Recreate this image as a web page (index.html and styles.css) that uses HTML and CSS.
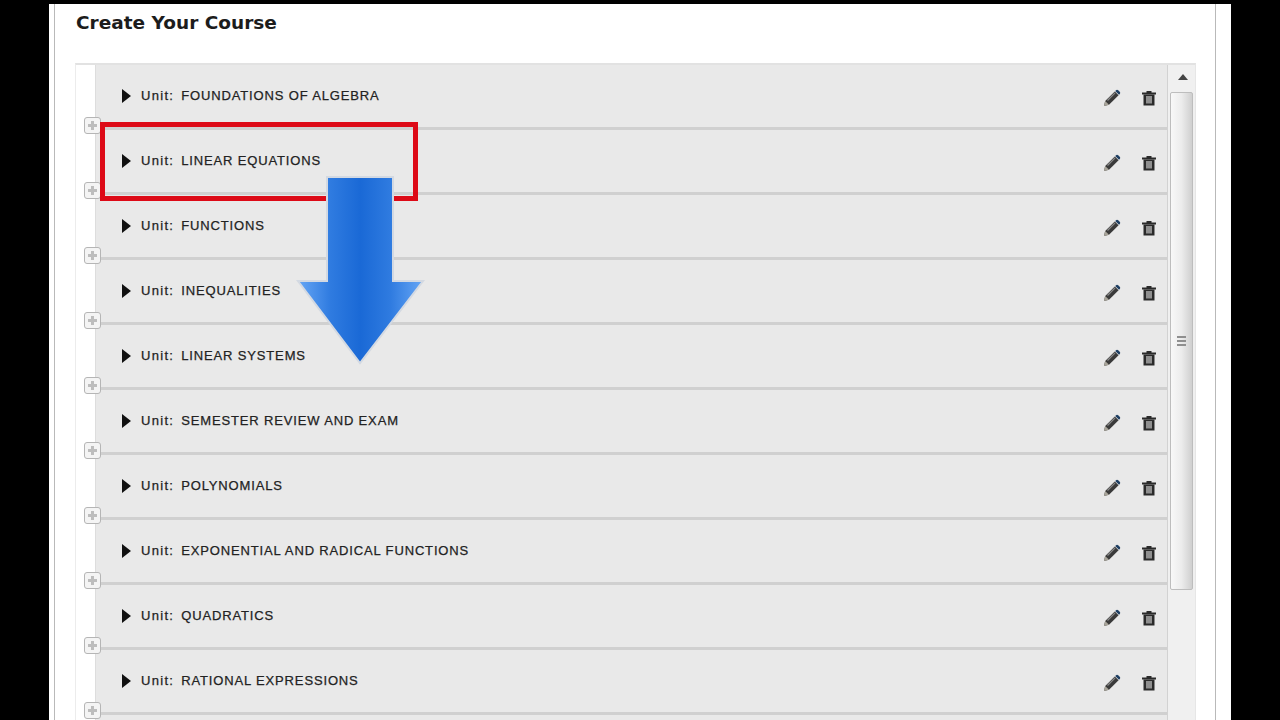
FILE: index.html
```html
<!DOCTYPE html>
<html lang="en">

<head>
    <meta charset="UTF-8">
    <title>Create Your Course</title>
    <link rel="stylesheet" href="styles.css">
</head>

<body>
    <svg class="sprites" width="0" height="0">
        <symbol id="pencil" viewBox="0 0 18 18">
            <path d="M1 17l1.2-5L11.8 2.400l3.800 3.800L6 15.800z" fill="#3a3a3a" />
            <path d="M12.800 1.400c.8-.8 1.700-.8 2.400-.1l1.500 1.500c.7.7.7 1.600-.1 2.400l-.6.6-3.800-3.800z" fill="#1f3f63" />
            <path d="M1 17l1.200-5 3.800 3.800z" fill="#a9a59a" />
            <path d="M4.500 11.500l7.600-7.600" stroke="#8b8b8b" stroke-width="1.200" />
        </symbol>
        <symbol id="trash" viewBox="0 0 16 16">
            <path d="M1 2.500h14V4.500H1zM5.500 1h5v2h-5z" fill="#2a2a2a" />
            <path d="M2.500 4.500h11V15.500h-11z" fill="#2a2a2a" />
            <path d="M5 6h6v7.500H5z" fill="#8f8f8f" />
        </symbol>
    </svg>

    <div class="page">
        <div class="frame">
            <h1 class="title">Create Your Course</h1>
            <div class="panel">
                <div class="gutter"></div>
                <div class="list">
                    <div class="row">
                        <span class="caret"></span><span class="label">Unit:</span><span class="name">FOUNDATIONS OF ALGEBRA</span>
                        <svg class="pencil"><use href="#pencil" /></svg><svg class="trash"><use href="#trash" /></svg>
                        <span class="add"></span>
                    </div>
                    <div class="row">
                        <span class="caret"></span><span class="label">Unit:</span><span class="name">LINEAR EQUATIONS</span>
                        <svg class="pencil"><use href="#pencil" /></svg><svg class="trash"><use href="#trash" /></svg>
                        <span class="add"></span>
                    </div>
                    <div class="row">
                        <span class="caret"></span><span class="label">Unit:</span><span class="name">FUNCTIONS</span>
                        <svg class="pencil"><use href="#pencil" /></svg><svg class="trash"><use href="#trash" /></svg>
                        <span class="add"></span>
                    </div>
                    <div class="row">
                        <span class="caret"></span><span class="label">Unit:</span><span class="name">INEQUALITIES</span>
                        <svg class="pencil"><use href="#pencil" /></svg><svg class="trash"><use href="#trash" /></svg>
                        <span class="add"></span>
                    </div>
                    <div class="row">
                        <span class="caret"></span><span class="label">Unit:</span><span class="name">LINEAR SYSTEMS</span>
                        <svg class="pencil"><use href="#pencil" /></svg><svg class="trash"><use href="#trash" /></svg>
                        <span class="add"></span>
                    </div>
                    <div class="row">
                        <span class="caret"></span><span class="label">Unit:</span><span class="name">SEMESTER REVIEW AND EXAM</span>
                        <svg class="pencil"><use href="#pencil" /></svg><svg class="trash"><use href="#trash" /></svg>
                        <span class="add"></span>
                    </div>
                    <div class="row">
                        <span class="caret"></span><span class="label">Unit:</span><span class="name">POLYNOMIALS</span>
                        <svg class="pencil"><use href="#pencil" /></svg><svg class="trash"><use href="#trash" /></svg>
                        <span class="add"></span>
                    </div>
                    <div class="row">
                        <span class="caret"></span><span class="label">Unit:</span><span class="name">EXPONENTIAL AND RADICAL FUNCTIONS</span>
                        <svg class="pencil"><use href="#pencil" /></svg><svg class="trash"><use href="#trash" /></svg>
                        <span class="add"></span>
                    </div>
                    <div class="row">
                        <span class="caret"></span><span class="label">Unit:</span><span class="name">QUADRATICS</span>
                        <svg class="pencil"><use href="#pencil" /></svg><svg class="trash"><use href="#trash" /></svg>
                        <span class="add"></span>
                    </div>
                    <div class="row">
                        <span class="caret"></span><span class="label">Unit:</span><span class="name">RATIONAL EXPRESSIONS</span>
                        <svg class="pencil"><use href="#pencil" /></svg><svg class="trash"><use href="#trash" /></svg>
                        <span class="add"></span>
                    </div>
                </div>
                <div class="scrollbar">
                    <div class="scroll-up"></div>
                    <div class="thumb">
                        <div class="grip"></div>
                    </div>
                </div>
            </div>
        </div>
    </div>

    <div class="callout"></div>
    <svg class="arrow" width="132" height="192" viewBox="0 0 132 192">
        <defs>
            <linearGradient id="arrowFill" x1="0" x2="1" y1="0" y2="0">
                <stop offset="0" stop-color="#66a6f5" />
                <stop offset="0.26" stop-color="#2f7be0" />
                <stop offset="0.5" stop-color="#1a69d6" />
                <stop offset="0.74" stop-color="#2f7be0" />
                <stop offset="1" stop-color="#66a6f5" />
            </linearGradient>
        </defs>
        <path d="M32 2H98V106H128L65 188 3 106H32z" fill="url(#arrowFill)" stroke="#d3d9e2" stroke-width="2" />
    </svg>
</body>

</html>
```

FILE: styles.css
```css
* {
    margin: 0;
    padding: 0;
    box-sizing: border-box;
}

body {
    background-color: #000000;
    height: 720px;
    overflow: hidden;
    font-family: "Liberation Sans", Arial, sans-serif;
}

.sprites {
    position: absolute;
}

.page {
    margin: 4px 49px 0;
    height: 716px;
    background-color: #ffffff;
    padding: 0 15px 0 5px;
}

.frame {
    height: 716px;
    border-left: 1px solid #b9b9b9;
    border-right: 1px solid #b9b9b9;
    padding: 0 19px 0 20px;
    overflow: hidden;
}

.title {
    font-family: "DejaVu Sans", sans-serif;
    font-size: 18.5px;
    font-weight: bold;
    line-height: 22px;
    color: #1c1c1c;
    padding-top: 8px;
    padding-left: 1px;
    height: 59px;
}

.panel {
    display: flex;
    height: 700px;
    border-top: 2px solid #e2e2e2;
    border-left: 1px solid #ececec;
    border-right: 1px solid #e6e6e6;
}

.gutter {
    width: 19px;
    flex-shrink: 0;
}

.list {
    width: 1073px;
    flex-shrink: 0;
    background-color: #e9e9e9;
    border-right: 1px solid #d2d2d2;
    border-left: 1px solid #dddddd;
}

.row {
    position: relative;
    display: flex;
    align-items: center;
    height: 65px;
    padding: 0 10px 1px 26px;
    border-bottom: 3px solid #d0d0d0;
    color: #222222;
    font-size: 13px;
    letter-spacing: 0.85px;
    -webkit-text-stroke: 0.25px #222222;
}

.caret {
    width: 0;
    height: 0;
    border-top: 7px solid transparent;
    border-bottom: 7px solid transparent;
    border-left: 9px solid #111111;
    margin-right: 10px;
}

.label {
    letter-spacing: 1.3px;
    margin-right: 7px;
}

.name {
    flex: 1;
}

.pencil {
    width: 18px;
    height: 18px;
    margin: 4px 1px 0 0;
}

.trash {
    width: 16px;
    height: 16px;
    margin: 4px 0 0 19px;
}

.add {
    position: absolute;
    left: -12px;
    bottom: -7px;
    width: 17px;
    height: 17px;
    background-color: #f4f4f4;
    border: 1px solid #b5b5b5;
    border-radius: 3px;
}

.add::before {
    content: "";
    position: absolute;
    left: 3px;
    top: 6px;
    width: 9px;
    height: 3px;
    background-color: #bdbdbd;
}

.add::after {
    content: "";
    position: absolute;
    left: 6px;
    top: 3px;
    width: 3px;
    height: 9px;
    background-color: #bdbdbd;
}

.scrollbar {
    flex: 1;
    background-color: #f0f0f0;
    padding: 0 2px;
}

.scroll-up {
    height: 27px;
    position: relative;
}

.scroll-up::before {
    content: "";
    position: absolute;
    left: 8px;
    top: 9px;
    border-left: 5px solid transparent;
    border-right: 5px solid transparent;
    border-bottom: 6px solid #444444;
}

.thumb {
    height: 498px;
    display: flex;
    align-items: center;
    justify-content: center;
    background: linear-gradient(to right, #f8f8f8, #ececec 50%, #cfcfcf);
    border: 1px solid #bdbdbd;
    border-radius: 2px;
}

.grip {
    width: 9px;
    height: 11px;
    background: repeating-linear-gradient(to bottom, #8f8f8f 0, #8f8f8f 2px, transparent 2px, transparent 4px);
}

.callout {
    position: absolute;
    left: 100px;
    top: 122px;
    width: 318px;
    height: 79px;
    border: 5px solid #dd0a17;
}

.arrow {
    position: absolute;
    left: 295px;
    top: 175px;
}
```
